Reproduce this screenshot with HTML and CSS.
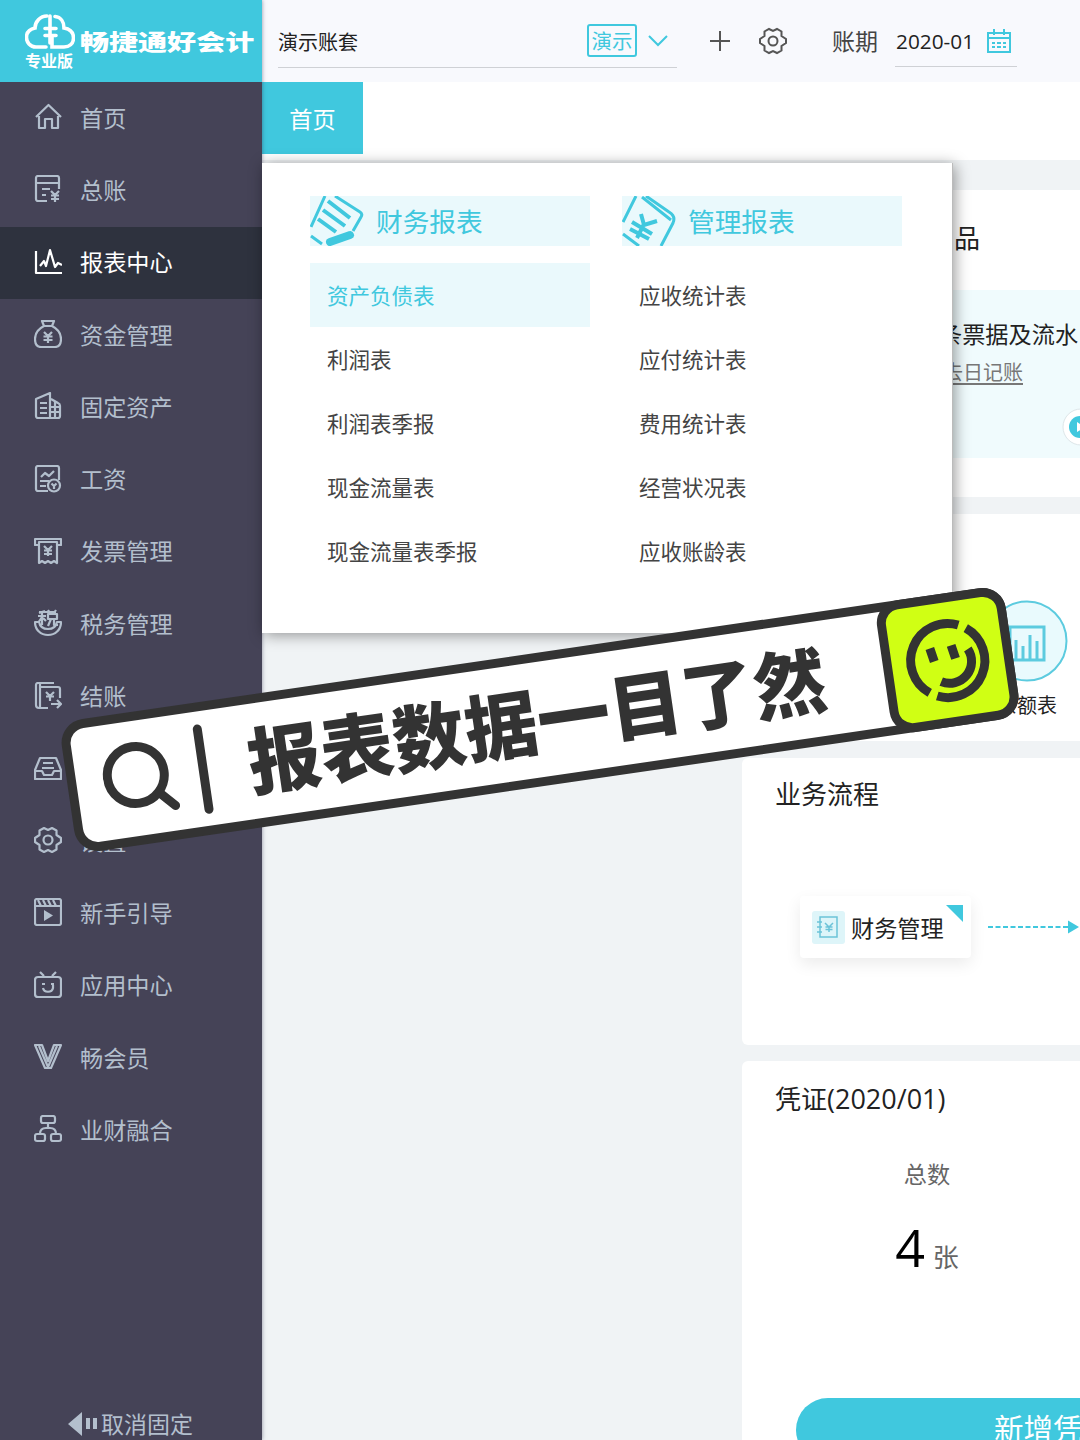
FILE: index.html
```html
<!DOCTYPE HTML>
<html lang="zh-CN">
  <head>
    <meta charset="utf-8">
    <title>好会计</title>
    <link rel="stylesheet" href="styles.css">
  </head>

  <body>
    <div class="app">

      <!-- sidebar -->
      <div class="sidebar">
        <div class="logo">
          <div class="logo-mark">
            <svg width="50" height="36" viewBox="0 0 50 36" fill="none" stroke="#fff" stroke-width="3.6" stroke-linecap="round">
              <path d="M21 33H11C5 33 1.500 28 1.500 23.500C1.500 18 5 15 10 14C10 8 15 2 22 2"/>
              <path d="M30 2.500C36 3 39 8 39 14C45 15 48.500 18 48.500 24C48.500 30 44 33 39 33H27V23"/>
              <path d="M25 2v27M20 14.500h11M20 21.500h11"/>
            </svg>
            <span>专业版</span>
          </div>
          <div class="logo-name">畅捷通好会计</div>
        </div>

        <ul class="menu">
          <li><svg class="ico" viewBox="0 0 28 28"><path d="M2 14L14.500 2L27 14M5 13v12h6v-9h7v9h6V13"/></svg><span>首页</span></li>
          <li><svg class="ico" viewBox="0 0 28 28"><path d="M13 26H4a2 2 0 0 1-2-2V3a2 2 0 0 1 2-2h19a2 2 0 0 1 2 2v11M2 8h23M8 14h8M8 20h4M17 16l4 4 4-4M21 20v7M17 20.500h8M17 24h8"/></svg><span>总账</span></li>
          <li class="active"><svg class="ico" viewBox="0 0 28 28"><path d="M2 3v22h26M6 18l4-5 2 5L16 2l5 17 3-4 4 2"/></svg><span>报表中心</span></li>
          <li><svg class="ico" viewBox="0 0 28 28"><path d="M8 1h12l-2 5h-8zM10 6C4 9 1 14 1 19c0 5 2 8 6 8h14c4 0 6-3 6-8 0-5-3-10-9-13M10 12l4 4 4-4M14 16v7M9.500 16.500h9M9.500 20h9"/></svg><span>资金管理</span></li>
          <li><svg class="ico" viewBox="0 0 28 28"><path d="M17 26H4a2 2 0 0 1-2-2V7l14-6v25M17 7l7 4a3 3 0 0 1 2 3v10a2 2 0 0 1-2 2h-7M6 11h7M6 16h7M6 21h7M17 15h9M17 20h9M21 10v16"/></svg><span>固定资产</span></li>
          <li><svg class="ico" viewBox="0 0 28 28"><path d="M14 26H4a2 2 0 0 1-2-2V3a2 2 0 0 1 2-2h19a2 2 0 0 1 2 2v12M7 12l4-4 4 3 5-5M6 16h9M6 21h6"/><circle cx="20" cy="20.500" r="6"/><path d="M17.500 18.500l2.500 2.500 2.500-2.500M20 21v3"/></svg><span>工资</span></li>
          <li><svg class="ico" viewBox="0 0 28 28"><path d="M5 8H1V2h26v6h-4M5 5v21l3-2 3 2 3-2 3 2 3-2 3 2V5zM10 9l4 4 4-4M14 13v6M10 13.500h8M10 17h8"/></svg><span>发票管理</span></li>
          <li><svg class="ico" viewBox="0 0 28 28"><path d="M1 13c0 8 6 13 13 13s13-5 13-13h-4c-1 5-4 7-9 7s-8-2-9-7zM5 4l6-2M4 7h8M8 4v12M8 8l-4 6M9 9l3 3M14 1l2 3M22 1l-2 3M14 5h9v5h-9zM17 10l-3 7M20 10v6h4M5 3h17"/></svg><span>税务管理</span></li>
          <li><svg class="ico" viewBox="0 0 28 28"><path d="M14 26H5a3 3 0 0 1-3-3V3a2 2 0 0 1 2-2h16M6 26V6a1 1 0 0 1 1-1h17a2 2 0 0 1 2 2v9M6 26V2M17 22h10M23 18l4 4-4 4M12 10l4 4 4-4M16 14v5M12 14.500h8"/></svg><span>结账</span></li>
          <li><svg class="ico" viewBox="0 0 28 28"><path d="M1 16L6 4h16l5 12v9H1zM1 17h7l2 4h8l2-4h7M9 9h10M8 14h12"/></svg></li>
          <li><svg class="ico" viewBox="0 0 28 28"><path d="M10 2L14 4L18 2L22.500 4.500L22.500 9L27 12V16L22.500 19V23.500L18 26L14 24L10 26L5.500 23.500V19L1 16V12L5.500 9V4.500Z"/><circle cx="14" cy="14" r="4.500"/></svg><span>设置</span></li>
          <li><svg class="ico" viewBox="0 0 28 28"><rect x="1" y="1" width="26" height="26" rx="2"/><path d="M1 8h26M4 2l3 6M9 2l3 6M14 2l3 6M19 2l3 6"/><path class="solid" d="M10 12l9 5.500-9 5.500z"/></svg><span>新手引导</span></li>
          <li><svg class="ico" viewBox="0 0 28 28"><rect x="1" y="6" width="26" height="20" rx="3"/><path d="M6 1l4 4M22 1l-4 4M8 13h3M17 13h3M9 17c1 5 9 5 10 0v-3"/></svg><span>应用中心</span></li>
          <li><svg class="ico" viewBox="0 0 28 28"><path d="M1 2h7l6 16 6-16h7L17 25h-6zM5 3l9 21L23 3"/></svg><span>畅会员</span></li>
          <li><svg class="ico" viewBox="0 0 28 28"><rect x="7" y="1" width="14" height="7" rx="2"/><rect x="1" y="19" width="10" height="7" rx="2"/><rect x="17" y="19" width="10" height="7" rx="2"/><path d="M14 8v5M6 19c0-4 2-6 6-6h4c4 0 6 2 6 6"/></svg><span>业财融合</span></li>
        </ul>

        <div class="unpin">
          <svg width="30" height="24" viewBox="0 0 30 24"><path d="M0 12L14 0V24zM18 6h4v11h-4zM25 6h4v11h-4z"/></svg>
          <span>取消固定</span>
        </div>
      </div>

      <!-- right side -->
      <div class="main">
        <div class="header">
          <div class="account">
            <span class="account-name">演示账套</span>
            <span class="tag">演示</span>
            <svg class="line-ico" width="20" height="12" viewBox="0 0 20 12"><path d="M1 1l9 9 9-9"/></svg>
          </div>
          <svg class="line-ico dark plus" width="20" height="20" viewBox="0 0 20 20"><path d="M10 0v20M0 10h20"/></svg>
          <svg class="line-ico dark" width="28" height="28" viewBox="0 0 28 28"><path d="M10 2L14 4L18 2L22.500 4.500L22.500 9L27 12V16L22.500 19V23.500L18 26L14 24L10 26L5.500 23.500V19L1 16V12L5.500 9V4.500Z"/><circle cx="14" cy="14" r="4.500"/></svg>
          <span class="period-label">账期</span>
          <div class="period">
            <span>2020-01</span>
            <svg class="line-ico" width="24" height="24" viewBox="0 0 24 24"><path d="M1 4h22v19H1zM1 9h22M7 0v6M17 0v6M5 14h3M10 14h4M16 14h3M5 18h3M10 18h4M16 18h3"/></svg>
          </div>
        </div>

        <div class="tabs">
          <div class="tab">首页</div>
        </div>

        <div class="content">
          <div class="card card-product">
            <div class="product-title">产品</div>
            <div class="product-box">
              <p>条票据及流水</p>
              <a>去日记账</a>
              <svg class="play" width="38" height="38" viewBox="0 0 38 38"><circle class="play-bg" cx="19" cy="19" r="18"/><circle class="play-dot" cx="18" cy="19" r="11"/><path d="M15 14l8 5-8 5z"/></svg>
            </div>
          </div>

          <div class="card card-report">
            <div class="shortcut">
              <svg width="82" height="82" viewBox="0 0 82 82">
                <circle cx="41" cy="41" r="39.500"/>
                <path class="chart" d="M24 27h34v33H24zM30 40v19M37 46v13M44 35v24M51 41v18"/>
              </svg>
              <span>余额表</span>
            </div>
          </div>

          <div class="card card-flow">
            <h3>业务流程</h3>
            <div class="flow">
              <div class="node">
                <span class="node-ico">
                  <svg width="22" height="22" viewBox="0 0 22 22"><path d="M3 1h17v20H3zM0 6h5M0 11h5M0 16h5M8 7l4 4 4-4M12 11v5M8.500 11h7M8.500 13.500h7"/></svg>
                </span>
                <span class="node-name">财务管理</span>
                <i class="corner"></i>
              </div>
              <svg class="arrow" width="92" height="14" viewBox="0 0 92 14"><path class="dash" d="M0 7h80"/><path class="head" d="M80 0.500L91 7L80 13.500z"/></svg>
            </div>
          </div>

          <div class="card card-voucher">
            <h3>凭证<span>(2020/01)</span></h3>
            <div class="total">
              <div class="total-label">总数</div>
              <div class="total-num"><b>4</b><span>张</span></div>
            </div>
            <div class="add-btn">新增凭证</div>
          </div>
        </div>
      </div>

      <!-- report center flyout -->
      <div class="flyout">
        <div class="col">
          <div class="col-head">
            <svg width="54" height="50" viewBox="0 0 54 50">
              <path d="M15 0L1 31M25 0L50 16Q53 18 51 21L43 35M1 40L12 48"/>
              <path class="thick" d="M18 5L40 22M13 14L35 30M8 23L26 36"/>
              <path class="blade" d="M20 46L40 39"/>
            </svg>
            <span>财务报表</span>
          </div>
          <ul>
            <li class="on">资产负债表</li>
            <li>利润表</li>
            <li>利润表季报</li>
            <li>现金流量表</li>
            <li>现金流量表季报</li>
          </ul>
        </div>
        <div class="col">
          <div class="col-head">
            <svg width="54" height="50" viewBox="0 0 54 50">
              <path d="M14 0L1 26M1 38L17 50M24 0L47 16Q54 20 51 27L39 50M20 1L49 24"/>
              <path class="thick" d="M19 18L22 29L35 25M22 28L15 42M10 26L30 38M8 33L27 43"/>
            </svg>
            <span>管理报表</span>
          </div>
          <ul>
            <li>应收统计表</li>
            <li>应付统计表</li>
            <li>费用统计表</li>
            <li>经营状况表</li>
            <li>应收账龄表</li>
          </ul>
        </div>
      </div>

      <!-- tilted search banner -->
      <div class="banner">
        <svg class="search" width="84" height="90" viewBox="0 0 84 90">
          <circle cx="33" cy="41" r="28.500"/>
          <path d="M54 62L68 77"/>
        </svg>
        <div class="divider"></div>
        <div class="slogan">报表数据一目了然</div>
        <div class="smile">
          <svg width="90" height="90" viewBox="-45 -45 90 90">
            <path d="M15.500 -33.600A37 37 0 0 0 -22.500 29.400"/>
            <path d="M22.500 -29.400A37 37 0 0 1 -15.500 33.600"/>
            <path d="M21.500 -8.500A22 22 0 0 1 -9.500 20"/>
            <path d="M-16 -14.500L-13.500 -1M5.500 -14.500L8 -1"/>
          </svg>
        </div>
      </div>

    </div>
  </body>
</html>
```
FILE: styles.css
```css
*{
  padding:0;
  margin:0;
  box-sizing:border-box;
}

body{
  font-family:"Noto Sans CJK SC", sans-serif;
  color:#222;
  background-color:#f0f3f5;
}

ul{
  list-style:none;
}

svg{
  display:block;
  flex:none;
}

.app{
  position:relative;
  width:1080px;
  height:1440px;
  display:flex;
  overflow:hidden;
  white-space:nowrap;
}

/* ---------- sidebar ---------- */
.sidebar{
  width:262px;
  flex:none;
  display:flex;
  flex-direction:column;
  background-color:#454357;
  box-shadow:0 0 4px rgba(40,40,70,0.5);
  z-index:1;
}

.logo{
  height:82px;
  flex:none;
  padding:14px 0 0 25px;
  display:flex;
  background-color:#40c8de;
  color:#fff;
}

.logo-mark{
  width:50px;
}

.logo-mark span{
  display:block;
  font-size:16px;
  line-height:20px;
  font-weight:700;
}

.logo-name{
  margin:10px 0 0 5px;
  font-size:22px;
  line-height:32px;
  font-weight:900;
  transform:scaleX(1.32);
  transform-origin:left;
}

.menu li{
  height:72.300px;
  padding-left:34px;
  display:flex;
  align-items:center;
  gap:18px;
  font-size:23.200px;
  color:#b3bfcd;
}

.menu span{
  padding-bottom:3px;
}

.menu li.active{
  background-color:#2e323e;
  color:#fff;
}

.ico{
  width:28px;
  height:28px;
  margin-top:-2px;
  fill:none;
  stroke:currentColor;
  stroke-width:2.200;
  stroke-linejoin:round;
}

.ico .solid{
  fill:currentColor;
  stroke:none;
}

.unpin{
  margin-top:auto;
  padding:0 0 3px 68px;
  height:30px;
  display:flex;
  align-items:center;
  gap:3px;
  font-size:23px;
  line-height:27px;
  color:#b3bfcd;
}

.unpin svg{
  fill:#b3bfcd;
}

/* ---------- header ---------- */
.main{
  flex:1;
  min-width:0;
  display:flex;
  flex-direction:column;
}

.header{
  height:82px;
  flex:none;
  padding-left:16px;
  display:flex;
  align-items:center;
  background-color:#f8f9fd;
}

.account{
  width:399px;
  height:54px;
  display:flex;
  align-items:center;
  border-bottom:1px solid #cfd1d5;
  padding-right:9px;
  margin-right:33px;
}

.account-name{
  font-size:20px;
  margin-right:auto;
  padding-top:2px;
}

.tag{
  width:50px;
  height:33px;
  margin-right:11px;
  border:2px solid #40c8de;
  border-radius:3px;
  font-size:20.500px;
  line-height:29px;
  text-align:center;
  color:#40c8de;
}

.line-ico{
  fill:none;
  stroke:#40c8de;
  stroke-width:2;
}

.line-ico.dark{
  stroke:#555;
}

.plus{
  margin-right:29px;
}

.period-label{
  margin:0 17px 3px 45px;
  font-size:23px;
  color:#444;
}

.period{
  width:122px;
  height:52px;
  padding-left:1px;
  display:flex;
  align-items:center;
  gap:13px;
  border-bottom:1px solid #cfd1d5;
  font:20.800px "Open Sans", sans-serif;
}

.tabs{
  height:78px;
  flex:none;
  background-color:#fff;
}

.tab{
  width:101px;
  height:72px;
  line-height:72px;
  text-align:center;
  font-size:23.200px;
  background-color:#40c8de;
  color:#fff;
}

/* ---------- cards ---------- */
.content{
  flex:1;
  padding:30px 0 0 480px;
  display:flex;
  flex-direction:column;
  gap:17px;
}

.card{
  flex:none;
  background-color:#fff;
  border-radius:6px 0 0 6px;
  overflow:hidden;
}

.card h3{
  padding-left:33px;
  font-size:26px;
  line-height:38px;
  font-weight:400;
}

.card-product{
  height:307px;
}

.product-title{
  padding-left:186px;
  height:100px;
  font-size:26px;
  line-height:93px;
}

.product-box{
  position:relative;
  height:168px;
  padding:26px 0 0 197px;
  background-color:#f0fbfd;
  font-size:23.200px;
  line-height:34px;
}

.product-box a{
  display:block;
  margin-top:6px;
  padding-left:4px;
  font-size:20px;
  line-height:32px;
  color:#777;
  text-decoration:underline;
  text-underline-offset:3px;
}

.play{
  position:absolute;
  left:320px;
  top:118px;
  fill:#fff;
}

.play-bg{
  stroke:#dde6e9;
}

.play-dot{
  fill:#40c8de;
}

.card-report{
  height:227px;
  padding:86px 0 0 244px;
}

.shortcut{
  width:82px;
  display:flex;
  flex-direction:column;
  align-items:center;
  gap:8px;
  font-size:20px;
}

.shortcut svg{
  fill:#e9fafd;
  stroke:#5ccbdf;
  stroke-width:2;
}

.shortcut .chart{
  stroke-width:3;
}

.card-flow{
  height:287px;
  padding-top:16px;
}

.flow{
  display:flex;
  align-items:center;
  gap:17px;
  padding:84px 0 0 58px;
}

.node{
  position:relative;
  width:171px;
  height:62px;
  padding-left:12px;
  display:flex;
  align-items:center;
  gap:6px;
  font-size:23.200px;
  border-radius:4px;
  box-shadow:0 6px 16px rgba(0,0,0,0.08);
}

.node-name{
  padding-bottom:1px;
}

.node-ico{
  width:33px;
  height:33px;
  padding:5px;
  border-radius:3px;
  background-color:#def5f9;
}

.node-ico svg{
  fill:none;
  stroke:#6cc3d8;
  stroke-width:1.500;
}

.corner{
  position:absolute;
  right:8px;
  top:9px;
  border-top:17px solid #40c8de;
  border-left:17px solid transparent;
}

.arrow{
  fill:#40c8de;
}

.dash{
  stroke:#40c8de;
  stroke-width:2;
  stroke-dasharray:5 2.500;
}

.card-voucher{
  height:420px;
  margin-top:-1px;
  padding-top:18px;
}

.card-voucher h3 span{
  font-family:"Open Sans", sans-serif;
  font-size:27px;
}

.total{
  width:370px;
  padding-top:38px;
  display:flex;
  flex-direction:column;
  align-items:center;
  color:#666;
}

.total-label{
  font-size:23.200px;
  line-height:34px;
}

.total-num{
  margin-top:19px;
  display:flex;
  align-items:baseline;
  gap:8px;
  font-size:26px;
  line-height:76px;
}

.total-num b{
  font:400 52px/76px "Open Sans", sans-serif;
  color:#000;
}

.add-btn{
  width:514px;
  height:64px;
  margin:104px 0 0 54px;
  border-radius:32px;
  font-size:29.500px;
  line-height:58px;
  text-align:center;
  background-color:#40c8de;
  color:#fff;
}

/* ---------- flyout ---------- */
.flyout{
  position:absolute;
  left:262px;
  top:163px;
  width:691px;
  height:470px;
  padding:33px 48px;
  display:flex;
  gap:32px;
  background-color:#fff;
  border-right:1px solid #bbb;
  box-shadow:2px 2px 14px rgba(0,0,0,0.4);
  z-index:2;
}

.col{
  width:280px;
  flex:none;
}

.col-head{
  height:50px;
  margin-bottom:17px;
  display:flex;
  align-items:center;
  gap:12px;
  font-size:26.700px;
  background-color:#eaf9fc;
  color:#40c8de;
}

.col-head span{
  padding-bottom:2px;
}

.col-head svg{
  fill:none;
  stroke:#40c8de;
  stroke-width:3;
}

.col-head .thick{
  stroke-width:4;
}

.col-head .blade{
  stroke-width:8;
  stroke-linecap:round;
}

.col li{
  height:64px;
  padding-left:17px;
  font-size:21.500px;
  line-height:64px;
  color:#444;
}

.col li.on{
  background-color:#eaf9fc;
  color:#40c8de;
}

/* ---------- banner ---------- */
.banner{
  position:absolute;
  left:63px;
  top:653px;
  width:954px;
  height:133px;
  display:flex;
  align-items:center;
  background-color:#fff;
  border:9px solid #333;
  border-radius:24px;
  transform:rotate(-8.300deg);
  z-index:3;
}

.search{
  margin-left:27px;
  fill:none;
  stroke:#333;
  stroke-width:9;
  stroke-linecap:round;
}

.divider{
  width:9px;
  height:90px;
  margin-left:12px;
  border-radius:5px;
  background-color:#333;
}

.slogan{
  margin:0 0 7px 41px;
  font-size:73px;
  line-height:100px;
  font-weight:900;
  color:#333;
}

.smile{
  width:130px;
  height:133px;
  margin:-9px -9px -9px auto;
  flex:none;
  display:flex;
  align-items:center;
  justify-content:center;
  background-color:#d0ff14;
  border:9px solid #333;
  border-radius:23px;
}

.smile svg{
  fill:none;
  stroke:#333;
  stroke-width:9;
}
```
